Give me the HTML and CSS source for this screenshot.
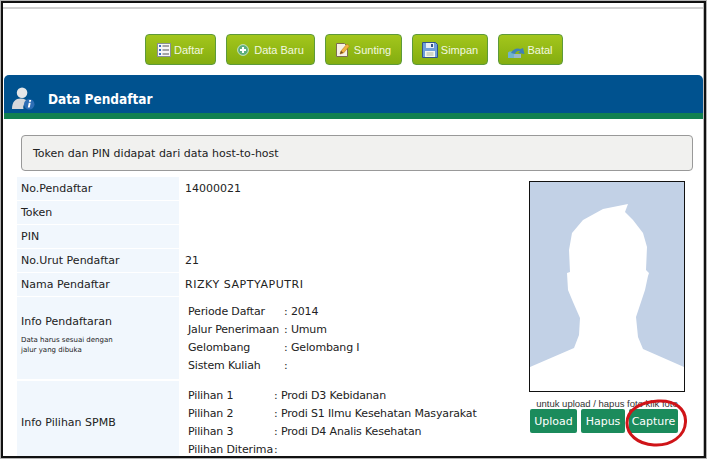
FILE: index.html
```html
<!DOCTYPE html>
<html lang="id">
<head>
<meta charset="utf-8">
<title>Data Pendaftar</title>
<link rel="stylesheet" href="styles.css">
</head>
<body>
<div class="frame">
  <div class="inner">
    <div class="topline"></div>
    <div class="toolbar">
      <a class="tbtn b1"><svg width="14" height="14" viewBox="0 0 14 14"><rect x=".5" y=".5" width="13" height="13" fill="#f6f6f6" stroke="#8a8f95"/><path d="M5.500 3h6.500M5.500 7h6.500M5.500 11h6.500" stroke="#555" stroke-width="1.100"/><path d="M2 2h2v2H2zM2 6h2v2H2zM2 10h2v2H2z" fill="#3a6fc0"/></svg>Daftar</a>
      <a class="tbtn b2"><svg width="12" height="12" viewBox="0 0 14 14"><circle cx="7" cy="7" r="6.300" fill="#5cae7c" stroke="#d8ebd8"/><path d="M7 3.500v7M3.500 7h7" stroke="#fff" stroke-width="2.400"/></svg>Data Baru</a>
      <a class="tbtn b3"><svg width="14" height="14" viewBox="0 0 14 14"><path d="M.5.500h8l3 3v10h-11z" fill="#f7f1e3" stroke="#7d6d50"/><path d="M4 11l1-3 6-7 2.500 2-6 7z" fill="#f2b33d" stroke="#b57a1c" stroke-width=".6"/><path d="M4 11l1-3 2.200 1.500z" fill="#6b4a20"/></svg>Sunting</a>
      <a class="tbtn b4"><svg width="16" height="16" viewBox="0 0 16 16"><path d="M.5.500h13l2 2v13H.5z" fill="#6f9fdc" stroke="#32548a"/><rect x="4" y="1" width="8" height="5" fill="#e8eef6"/><rect x="9" y="2" width="2" height="3" fill="#32548a"/><rect x="3" y="9" width="10" height="6" fill="#f6f8ee"/><path d="M4.500 11h7M4.500 13h7" stroke="#a9b7a0"/></svg>Simpan</a>
      <a class="tbtn b5"><svg class="batal-icon" width="17" height="10" viewBox="0 0 17 10"><path d="M0 10V5c0-1 1-1.500 2-1.500h5V10z" fill="#6fb3cf"/><path d="M3 5C5 1 9-.5 12.500 1L15 0l1.500 6-6.500-1 2-1.500C10 2.500 8 3.500 7 6z" fill="#3f80b8"/><path d="M6 10V6h7v4z" fill="#9ab7c9"/></svg>Batal</a>
    </div>
    <section class="panel">
      <header class="panel-head">
        <svg class="head-icon" width="23" height="23" viewBox="0 0 24 24"><circle cx="10.500" cy="6" r="5.500" fill="#e4e6e8"/><path d="M0 23c0-8 4-11 9-11 4 0 7 2 8 4-4 1-6 3-5 7z" fill="#d5d8db"/><circle cx="18" cy="18" r="5.500" fill="#2d6eb5"/><path d="M17.500 16.500h2l-1 5h-2zM18 13.500h2l-.3 2h-2z" fill="#fff"/></svg>
        <h1>Data Pendaftar</h1>
      </header>
      <div class="panel-body">
        <div class="notice">Token dan PIN didapat dari data host-to-host</div>
        <div class="content">
          <div class="fields">
            <div class="lbl">No.Pendaftar</div><div class="val">14000021</div>
            <div class="lbl">Token</div><div class="val"></div>
            <div class="lbl">PIN</div><div class="val"></div>
            <div class="lbl">No.Urut Pendaftar</div><div class="val">21</div>
            <div class="lbl">Nama Pendaftar</div><div class="val caps">RIZKY SAPTYAPUTRI</div>
            <div class="lbl tall">
              <div>Info Pendaftaran</div>
              <small>Data harus sesuai dengan<br>jalur yang dibuka</small>
            </div>
            <div class="val multi">
              <div class="kv k1"><span>Periode Daftar</span><span>: 2014</span></div>
              <div class="kv k1"><span>Jalur Penerimaan</span><span>: Umum</span></div>
              <div class="kv k1"><span>Gelombang</span><span>: Gelombang I</span></div>
              <div class="kv k1"><span>Sistem Kuliah</span><span>:</span></div>
            </div>
            <div class="lbl">Info Pilihan SPMB</div>
            <div class="val multi">
              <div class="kv k2"><span>Pilihan 1</span><span>: Prodi D3 Kebidanan</span></div>
              <div class="kv k2"><span>Pilihan 2</span><span>: Prodi S1 Ilmu Kesehatan Masyarakat</span></div>
              <div class="kv k2"><span>Pilihan 3</span><span>: Prodi D4 Analis Kesehatan</span></div>
              <div class="kv k2"><span>Pilihan Diterima</span><span>:</span></div>
            </div>
          </div>
          <aside class="photo-col">
            <div class="photo">
              <svg width="154" height="209" viewBox="530 182 154 209"><path d="M628 204L625 212L633 220L643 233L647 247L646 270L649 273L648 276L645 290L636 317L638 337L643 349L684 367V391H530V367L574 348L579 335L580 318L573 302L568 290L567 273L570 272L569 250L572 233L583 220L603 209Z" fill="#fff"/></svg>
            </div>
            <p class="hint">untuk upload / hapus foto klik foto</p>
            <div class="photo-btns">
              <a class="gbtn g1">Upload</a>
              <a class="gbtn g2">Hapus</a>
              <a class="gbtn g3">Capture</a>
            </div>
            <svg class="ring" width="62" height="48" viewBox="0 0 62 48"><path d="M33 2C50 1 61 10 60.500 23C60 37 46 47 29 46C12 45 2 35 2 24C2 11 15 3 33 2Z" fill="none" stroke="#cf1418" stroke-width="3"/></svg>
          </aside>
        </div>
      </div>
    </section>
  </div>
</div>
</body>
</html>
```
FILE: styles.css
```css
* { box-sizing: border-box; }
html, body { margin: 0; padding: 0; background: #b4b4b4; }
body { padding: 1px 0 0 1px; width: 707px; height: 459px; overflow: hidden; }
.frame {
  width: 705px;
  height: 457px;
  overflow: hidden;
  background: #fff;
  border: 2px solid #111;
  font-family: "DejaVu Sans", sans-serif;
  font-size: 11px;
  color: #222;
}
.inner {
  height: 100%;
  padding-left: 1px;
  border-right: 1px solid #bbb;
  overflow: hidden;
}
.topline {
  margin: 4px 0 0 -1px;
  height: 2px;
  background: #d0d0d0;
}
.toolbar {
  height: 66px;
  padding: 25px 0 0 141px;
  display: flex;
  align-items: flex-start;
  gap: 10px;
}
.tbtn {
  height: 31px;
  display: flex;
  align-items: center;
  justify-content: center;
  gap: 3px;
  border: 1px solid #5d9a3a;
  border-radius: 4px;
  background: linear-gradient(#a3c61c, #84ad10);
  color: #f2f8e0;
  font: 11px "Liberation Sans", sans-serif;
}
.b1 { width: 71px; }
.b2 { width: 89px; gap: 5px; }
.b3 { width: 77px; gap: 4px; }
.b4 { width: 76px; }
.b5 { width: 65px; gap: 2px; }
.batal-icon { margin-top: 6px; }
.panel-head {
  height: 44px;
  background: #00528f;
  border-bottom: 6px solid #118050;
  border-radius: 5px 5px 0 0;
  display: flex;
  align-items: center;
  padding: 8px 0 0 8px;
}
.panel-head h1 {
  margin: 2px 0 0 13px;
  font: bold 13.500px "DejaVu Sans Condensed", "DejaVu Sans", sans-serif;
  color: #fff;
}
.panel-body { padding: 16px 10px 0 13px; }
.notice {
  margin-left: 4px;
  height: 36px;
  padding-left: 11px;
  display: flex;
  align-items: center;
  background: #f1f1ef;
  border: 1px solid #999;
  border-radius: 4px;
}
.content { display: flex; padding-top: 6px; }
.fields {
  width: 512px;
  display: grid;
  grid-template-columns: 162px 1fr;
  grid-template-rows: 23px 23px 23px 23px 23px 82px 84px;
  row-gap: 1px;
  align-content: start;
}
.lbl {
  background: #f1f7fd;
  padding-left: 4px;
  display: flex;
  align-items: center;
}
.val { padding-left: 6px; display: flex; align-items: center; }
.caps { letter-spacing: .55px; }
.tall {
  flex-direction: column;
  align-items: flex-start;
  padding-top: 18px;
}
.tall small { font-size: 7px; line-height: 10px; margin-top: 7px; }
.multi { display: block; padding: 6px 0 0 9px; letter-spacing: -.15px; }
.tall + .multi + .lbl, .tall + .multi + .lbl + .multi { margin-top: 1px; }
.kv { height: 18px; line-height: 18px; display: flex; white-space: nowrap; }
.k1 span:first-child { width: 96px; }
.k2 span:first-child { width: 86px; }
.photo-col { position: relative; padding-top: 4px; width: 156px; flex: none; }
.photo {
  width: 156px;
  height: 211px;
  background: #c2d1e6;
  border: 1px solid #111;
  overflow: hidden;
}
.photo svg { display: block; }
.hint {
  margin: 6px 0 0;
  font: 9.500px/11px "Liberation Sans", sans-serif;
  color: #333;
  text-align: center;
  white-space: nowrap;
}
.photo-btns { display: flex; gap: 4px; margin-left: 1px; }
.gbtn {
  height: 24px;
  display: flex;
  align-items: center;
  justify-content: center;
  background: #1b8b5c;
  color: #fff;
  border-radius: 2px;
  font-size: 11px;
}
.g1 { width: 47px; }
.g2 { width: 44px; }
.g3 { width: 49px; }
.ring { position: absolute; left: 96px; top: 222px; }
```
